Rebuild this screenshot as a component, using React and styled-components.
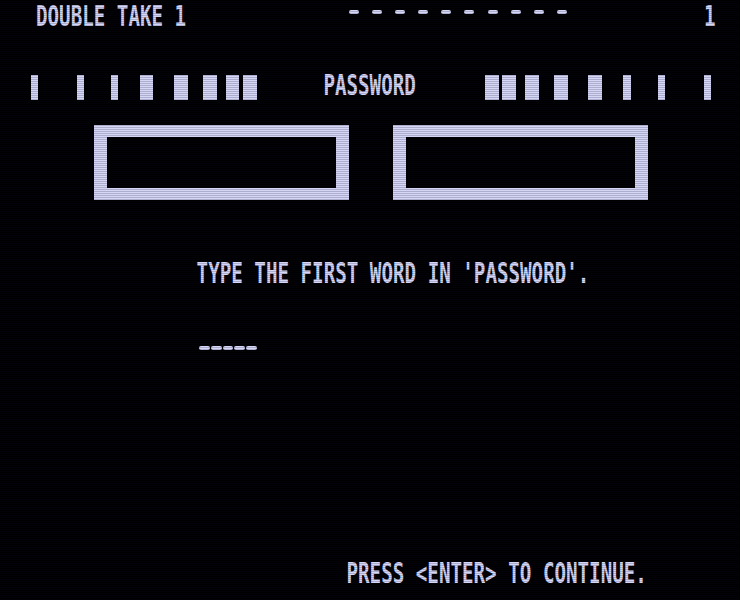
import React from 'react'
import styled, { createGlobalStyle } from 'styled-components'

const GlobalStyle = createGlobalStyle`
    html, body {
        margin: 0;
        padding: 0;
        background: #000;
    }
`

const PHOSPHOR = '#d6d6f7'
const CELL = 11.5625

const Screen = styled.div`
    position: relative;
    width: 740px;
    height: 600px;
    background: #000;
    overflow: hidden;
    display: flex;
    flex-direction: column;
    font-family: "DejaVu Sans Mono", "Liberation Mono", monospace;
    color: ${PHOSPHOR};
    &::after {
        content: "";
        position: absolute;
        inset: 0;
        pointer-events: none;
        background: repeating-linear-gradient(
            to bottom,
            rgba(0, 0, 0, 0) 0px,
            rgba(0, 0, 0, 0) 1px,
            rgba(10, 10, 40, 0.2) 1px,
            rgba(10, 10, 40, 0.2) 2px
        );
    }
`

const Row = styled.div`
    display: flex;
    align-items: flex-start;
    flex: none;
    box-sizing: border-box;
    height: ${p => p.$h}px;
    margin-top: ${p => p.$top || 0}px;
    padding-left: ${p => p.$indent || 0}px;
    padding-right: ${p => p.$right || 0}px;
`

// tall, narrow character cells: the font is set to the cell pitch and stretched upward
const Text = styled.span`
    display: inline-block;
    flex: none;
    font-size: 19.2px;
    line-height: 22.35px;
    font-weight: bold;
    white-space: pre;
    width: ${p => p.$chars * CELL}px;
    margin-left: ${p => (p.$push ? 'auto' : `${p.$gap || 0}px`)};
    transform-origin: top left;
    transform: translateY(${p => -(p.$lift ?? 5.7)}px) scaleY(1.5);
`

const DashStrip = styled.div`
    display: flex;
    gap: ${p => p.$gap}px;
    margin-left: ${p => p.$at}px;
    margin-top: ${p => p.$y}px;
`

const Dash = styled.span`
    width: ${p => p.$w}px;
    height: 4px;
    border-radius: 2px;
    background: ${PHOSPHOR};
`

const Bar = styled.span`
    flex: none;
    width: ${p => p.$w}px;
    height: 25px;
    margin-left: ${p => p.$gap}px;
    background: ${PHOSPHOR};
`

const Frame = styled.div`
    flex: none;
    box-sizing: border-box;
    width: 254.5px;
    height: 75px;
    margin-left: ${p => p.$gap}px;
    border: 12.5px solid ${PHOSPHOR};
    border-left-width: 13px;
    border-right-width: 13px;
    background: #000;
`

// left-hand bar run, as [gap before, width]; the right run mirrors it
const THIN = 7.5
const WIDE = 13.4
const leftBars = [
    [30.7, THIN], [38.5, THIN], [26.8, THIN], [21.5, WIDE],
    [20.9, WIDE], [15.6, WIDE], [9.3, WIDE], [3.9, WIDE],
]
const rightBars = leftBars
    .map(([, w], i) => [i === leftBars.length - 1 ? 69.3 : leftBars[i + 1][0], w])
    .reverse()

const BarRun = ({ bars }) => bars.map(([gap, w], i) => <Bar key={i} $gap={gap} $w={w} />)

const App = () => {
    return (
        <>
            <GlobalStyle />
            <Screen>
                <Row $h={75} $indent={36} $right={24.4}>
                    <Text $chars={13} $lift={0}>DOUBLE TAKE 1</Text>
                    <DashStrip $at={162.7} $y={9.5} $gap={13.1}>
                        {Array.from({ length: 10 }, (_, i) => <Dash key={i} $w={10} />)}
                    </DashStrip>
                    <Text $chars={1} $lift={0} $push>1</Text>
                </Row>

                <Row $h={50}>
                    <BarRun bars={leftBars} />
                    <Text $chars={8} $gap={66.8}>PASSWORD</Text>
                    <BarRun bars={rightBars} />
                </Row>

                <Row $h={75}>
                    <Frame $gap={94} />
                    <Frame $gap={44.8} />
                </Row>

                <Row $h={75} $top={62.5} $indent={196.6}>
                    <Text $chars={34}>TYPE THE FIRST WORD IN 'PASSWORD'.</Text>
                </Row>

                <Row $h={37.5} $indent={199.3}>
                    <DashStrip $at={0} $y={8.5} $gap={1}>
                        {Array.from({ length: 5 }, (_, i) => <Dash key={i} $w={10.7} />)}
                    </DashStrip>
                </Row>

                <Row $h={37.5} $top={187.5} $indent={346.5}>
                    <Text $chars={26}>PRESS &lt;ENTER&gt; TO CONTINUE.</Text>
                </Row>
            </Screen>
        </>
    )
}

export default App
